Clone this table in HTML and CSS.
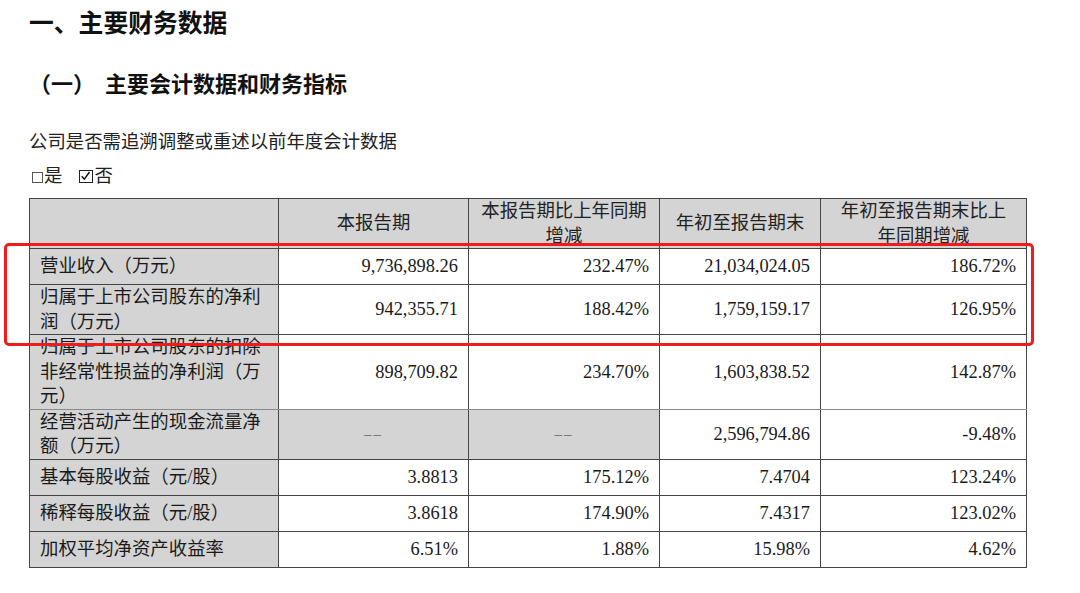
FILE: index.html
```html
<!DOCTYPE html>
<html lang="zh-CN">
<head>
<meta charset="utf-8">
<title>主要财务数据</title>
<link rel="stylesheet" href="styles.css">
</head>
<body>
<div class="page">
  <h1 class="h1">一、主要财务数据</h1>
  <h2 class="h2"><span class="h2-num">（一）</span>主要会计数据和财务指标</h2>
  <p class="para">公司是否需追溯调整或重述以前年度会计数据</p>
  <p class="para check"><span class="box"></span>是<span class="box checked"><svg viewBox="0 0 12 12" width="11" height="10"><path d="M1.5 6.2 L4.6 9.8 L10.8 1.2" fill="none" stroke="#111" stroke-width="1.7"/></svg></span>否</p>
  <div class="table-wrap">
    <table class="fin">
      <colgroup>
        <col class="c1"><col class="c2"><col class="c3"><col class="c4"><col class="c5">
      </colgroup>
      <thead>
        <tr class="hdr">
          <th class="gray"></th>
          <th class="gray">本报告期</th>
          <th class="gray">本报告期比上年同期<br>增减</th>
          <th class="gray">年初至报告期末</th>
          <th class="gray">年初至报告期末比上<br>年同期增减</th>
        </tr>
      </thead>
      <tbody>
        <tr class="single">
          <td class="label gray">营业收入（万元）</td>
          <td class="num">9,736,898.26</td>
          <td class="num">232.47%</td>
          <td class="num">21,034,024.05</td>
          <td class="num">186.72%</td>
        </tr>
        <tr>
          <td class="label gray">归属于上市公司股东的净利<br>润（万元）</td>
          <td class="num">942,355.71</td>
          <td class="num">188.42%</td>
          <td class="num">1,759,159.17</td>
          <td class="num">126.95%</td>
        </tr>
        <tr class="soft">
          <td class="label gray">归属于上市公司股东的扣除<br>非经常性损益的净利润（万<br>元）</td>
          <td class="num">898,709.82</td>
          <td class="num">234.70%</td>
          <td class="num">1,603,838.52</td>
          <td class="num">142.87%</td>
        </tr>
        <tr>
          <td class="label gray">经营活动产生的现金流量净<br>额（万元）</td>
          <td class="dash gray">––</td>
          <td class="dash gray">––</td>
          <td class="num">2,596,794.86</td>
          <td class="num">-9.48%</td>
        </tr>
        <tr class="single">
          <td class="label gray">基本每股收益（元/股）</td>
          <td class="num">3.8813</td>
          <td class="num">175.12%</td>
          <td class="num">7.4704</td>
          <td class="num">123.24%</td>
        </tr>
        <tr class="single">
          <td class="label gray">稀释每股收益（元/股）</td>
          <td class="num">3.8618</td>
          <td class="num">174.90%</td>
          <td class="num">7.4317</td>
          <td class="num">123.02%</td>
        </tr>
        <tr class="single">
          <td class="label gray">加权平均净资产收益率</td>
          <td class="num">6.51%</td>
          <td class="num">1.88%</td>
          <td class="num">15.98%</td>
          <td class="num">4.62%</td>
        </tr>
      </tbody>
    </table>
    <div class="highlight"></div>
  </div>
</div>
</body>
</html>
```

FILE: styles.css
```css
html, body {
  margin: 0;
  padding: 0;
  background: #ffffff;
}

body {
  font-family: "Liberation Serif", "Noto Sans CJK SC", serif;
  color: #1a1a1a;
}

.page {
  padding-left: 29px;
  width: 1000px;
}

.h1 {
  margin: 0;
  font-size: 24.8px;
  line-height: 47px;
  font-weight: 700;
  color: #111;
}

.h2 {
  margin: 23px 0 0 0;
  font-size: 22px;
  line-height: 30px;
  font-weight: 700;
  color: #111;
}

.h2-num {
  margin-right: 10px;
}

.para {
  margin: 29px 0 0 0;
  font-size: 18.4px;
  line-height: 26px;
  color: #222;
}

.check {
  margin-top: 8px;
}

.box {
  display: inline-block;
  box-sizing: border-box;
  width: 11px;
  height: 11px;
  border: 1px solid #555;
  margin: 0 1px 0 3px;
  vertical-align: -1px;
}

.box.checked {
  width: 14px;
  height: 13px;
  border: 1.5px solid #222;
  margin-left: 17px;
  margin-right: 1px;
  vertical-align: -1px;
}

.box.checked svg {
  display: block;
}

.table-wrap {
  position: relative;
  margin-top: 9px;
  width: 998px;
}

.fin {
  border-collapse: collapse;
  table-layout: fixed;
  width: 997px;
  font-size: 18.4px;
  line-height: 24.5px;
  color: #1a1a1a;
}

.c1 { width: 249px; }
.c2 { width: 190px; }
.c3 { width: 191px; }
.c4 { width: 161px; }
.c5 { width: 206px; }

.fin th,
.fin td {
  border: 1px solid #454545;
  padding: 0 10px;
  vertical-align: middle;
  font-weight: 400;
}

.fin th {
  text-align: center;
  color: #222;
}

.hdr {
  height: 50px;
}

.single {
  height: 36px;
}

.gray {
  background: #d4d4d4;
}

.label {
  text-align: left;
  padding-left: 12px;
  padding-right: 4px;
  white-space: nowrap;
}

.num {
  text-align: right;
  white-space: nowrap;
}

.dash {
  text-align: center;
  color: #666;
  font-size: 15px;
  letter-spacing: 2px;
}

.soft td {
  border-bottom-color: #8a8a8a;
}

.highlight {
  position: absolute;
  box-sizing: border-box;
  left: -25px;
  top: 45px;
  width: 1030px;
  height: 103px;
  border: 3px solid #f01c1c;
  border-radius: 5px;
  pointer-events: none;
}
```
